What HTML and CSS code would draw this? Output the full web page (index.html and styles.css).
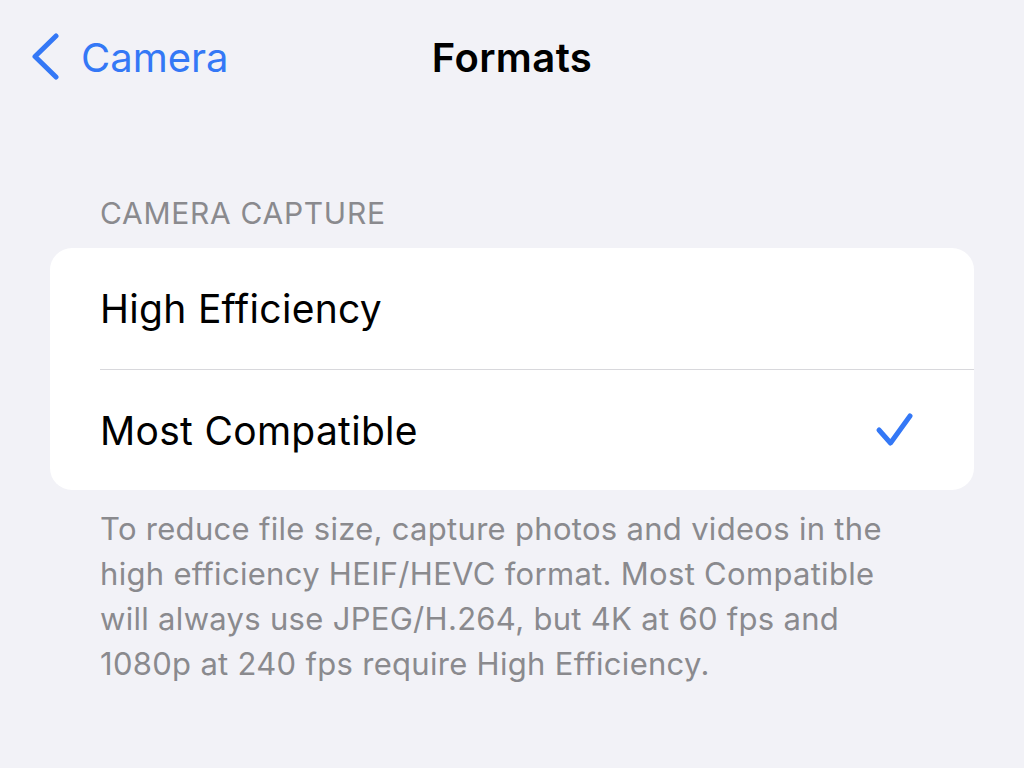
FILE: index.html
```html
<!DOCTYPE html>
<html>
<head>
<meta charset="utf-8">
<link rel="stylesheet" href="styles.css">
</head>
<body>
<header class="nav">
  <div class="back">
    <svg class="chev" width="30" height="48" viewBox="0 0 30 48"><polyline points="25,3 4,23.5 25,44" fill="none" stroke="#3478F6" stroke-width="5" stroke-linecap="round" stroke-linejoin="round"/></svg>
    <span class="back-label">Camera</span>
  </div>
  <h1 class="title">Formats</h1>
  <div class="spacer"></div>
</header>
<main class="content">
  <div class="section-header">CAMERA CAPTURE</div>
  <div class="card">
    <div class="row"><span class="row-label">High Efficiency</span></div>
    <div class="row"><span class="row-label">Most Compatible</span>
      <svg class="check" width="40" height="40" viewBox="0 0 40 40"><polyline points="4,20 15.5,33 35,6" fill="none" stroke="#3478F6" stroke-width="5" stroke-linecap="round" stroke-linejoin="round"/></svg>
    </div>
  </div>
  <p class="footer">To reduce file size, capture photos and videos in the<br>high efficiency HEIF/HEVC format. Most Compatible<br>will always use JPEG/H.264, but 4K at 60 fps and<br>1080p at 240 fps require High Efficiency.</p>
</main>
</body>
</html>
```
FILE: styles.css
```css
html, body {
  margin: 0;
  padding: 0;
}
body {
  background: #F2F2F7;
  font-family: Inter, "Noto Sans", sans-serif;
  width: 1024px;
  height: 768px;
  overflow: hidden;
}
.nav {
  display: grid;
  grid-template-columns: 1fr auto 1fr;
  align-items: center;
  height: 114px;
}
.back {
  display: flex;
  align-items: center;
  padding-left: 31px;
  gap: 20px;
  color: #3478F6;
}
.chev {
  display: block;
}
.back-label {
  font-size: 40px;
  font-weight: 400;
}
.title {
  margin: 0;
  font-size: 40px;
  font-weight: 600;
  letter-spacing: 0.4px;
  color: #000;
}
.content {
  padding: 81px 50px 0 50px;
}
.section-header {
  font-size: 30px;
  letter-spacing: 0.7px;
  color: #8A8A8E;
  padding-left: 50px;
  line-height: 36px;
  margin-bottom: 17px;
}
.card {
  background: #fff;
  border-radius: 22px;
  overflow: hidden;
}
.row {
  height: 121px;
  display: flex;
  align-items: center;
  justify-content: space-between;
  margin-left: 50px;
  padding-right: 59px;
  box-sizing: border-box;
}
.row + .row {
  border-top: 1.5px solid #D8D8DC;
}
.row-label {
  font-size: 39px;
  letter-spacing: 0.3px;
  color: #000;
}
.check {
  display: block;
}
.footer {
  margin: 16px 0 0 0;
  padding-left: 50px;
  font-size: 31px;
  letter-spacing: 0.3px;
  line-height: 45px;
  color: #8A8A8E;
}
```
